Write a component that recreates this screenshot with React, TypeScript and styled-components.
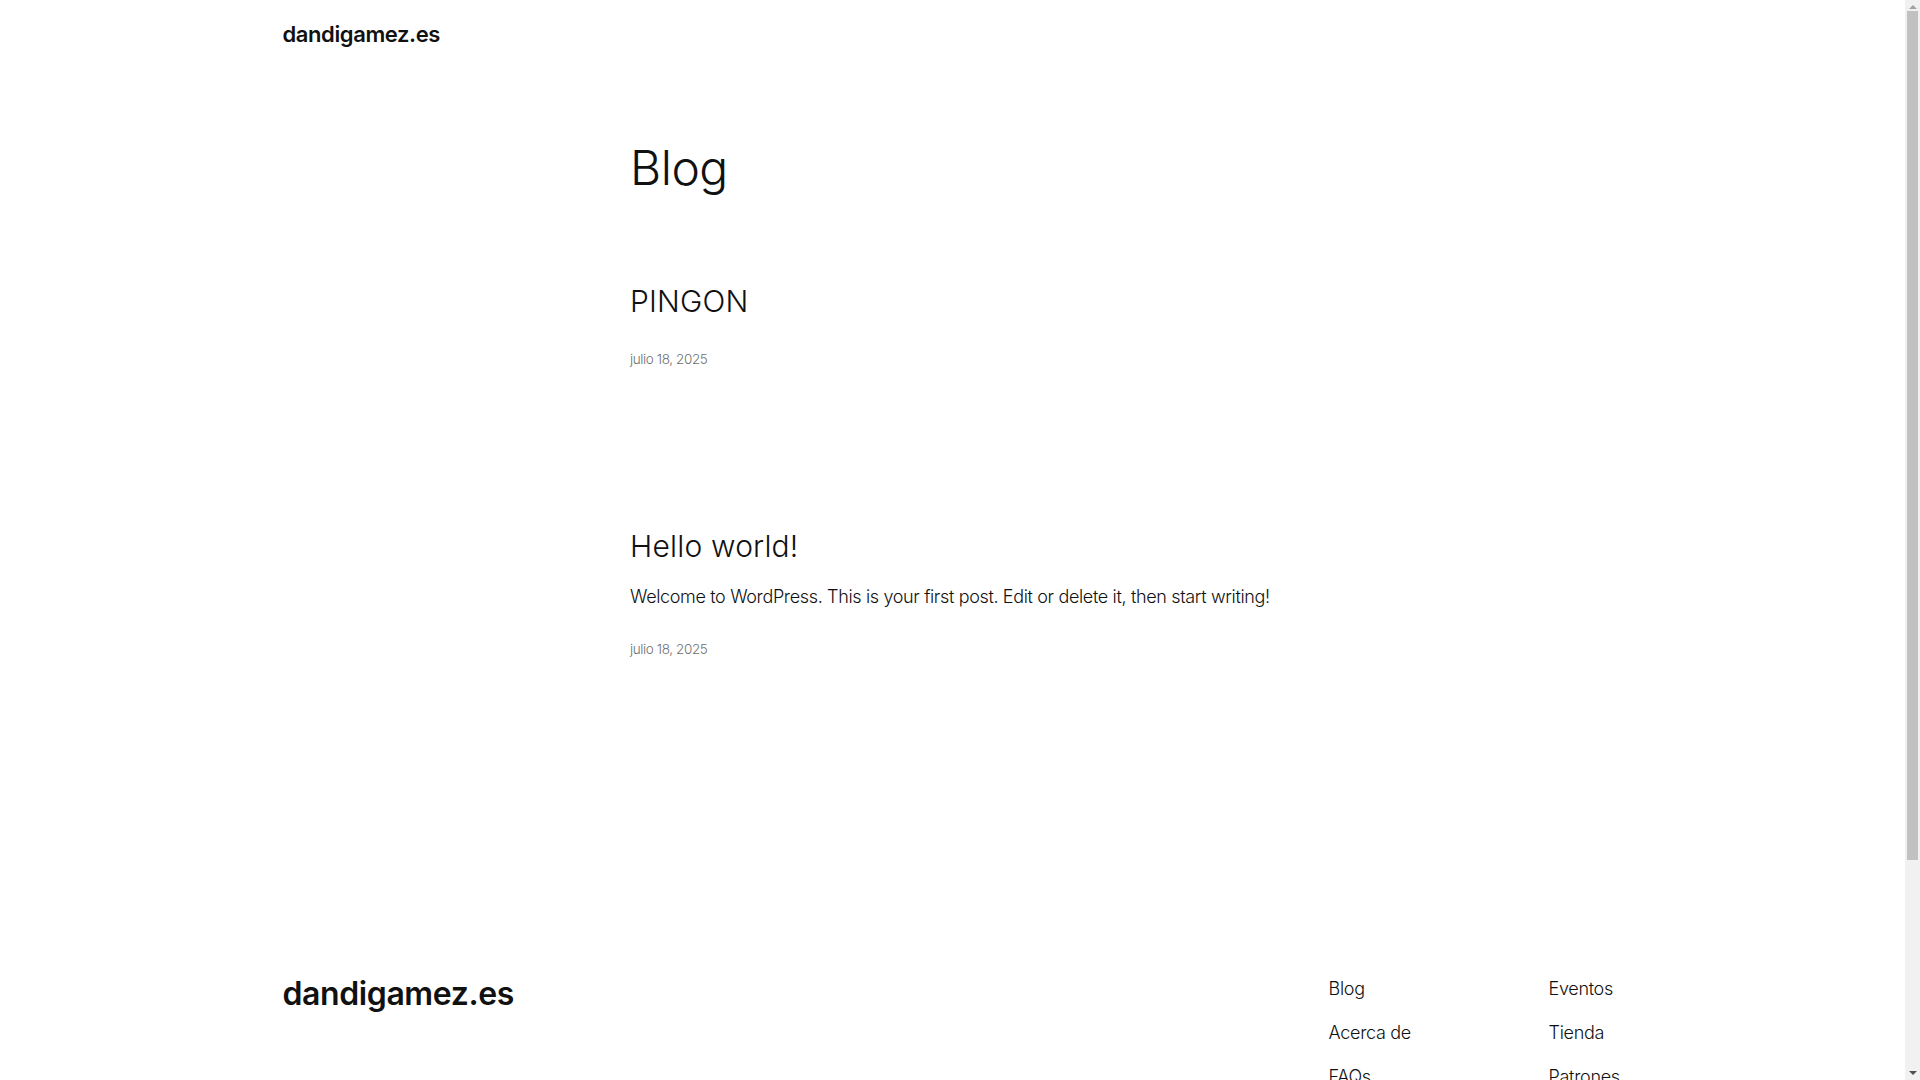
import styled, { createGlobalStyle } from 'styled-components';

const GlobalStyle = createGlobalStyle`
  html, body {
    margin: 0;
    padding: 0;
    background: #ffffff;
  }
  body {
    font-family: 'Inter', 'Liberation Sans', sans-serif;
    color: #111111;
    -webkit-font-smoothing: antialiased;
  }
`;

const posts = [
  { title: 'PINGON', excerpt: '', date: 'julio 18, 2025' },
  {
    title: 'Hello world!',
    excerpt:
      'Welcome to WordPress. This is your first post. Edit or delete it, then start writing!',
    date: 'julio 18, 2025',
  },
];

const navColumns = [
  ['Blog', 'Acerca de', 'FAQs', 'Autores'],
  ['Eventos', 'Tienda', 'Patrones', 'Temas'],
];

export default function App() {
  return (
    <>
      <GlobalStyle />
      <Page>
        <Header>
          <SiteTitle href="#">dandigamez.es</SiteTitle>
        </Header>

        <Main>
          <PageTitle>Blog</PageTitle>
          <PostList>
            {posts.map((post) => (
              <Post key={post.title}>
                <PostTitle>{post.title}</PostTitle>
                {post.excerpt && <Excerpt>{post.excerpt}</Excerpt>}
                <PostDate $spaced={!post.excerpt}>{post.date}</PostDate>
              </Post>
            ))}
          </PostList>
        </Main>

        <Footer>
          <FooterRow>
            <FooterTitle href="#">dandigamez.es</FooterTitle>
            <FooterNav>
              {navColumns.map((col, i) => (
                <NavColumn key={i}>
                  {col.map((item) => (
                    <NavLink key={item} href="#">
                      {item}
                    </NavLink>
                  ))}
                </NavColumn>
              ))}
            </FooterNav>
          </FooterRow>
          <Credits>
            <span>Twenty Twenty-Five</span>
            <span>
              Diseñado con <u>WordPress</u>
            </span>
          </Credits>
        </Footer>
      </Page>

      {/* the window's scrollbar, drawn over the right edge */}
      <Scrollbar>
        <ArrowUp />
        <Thumb />
        <ArrowDown />
      </Scrollbar>
    </>
  );
}

const Page = styled.div`
  width: calc(100% - 15px);
  display: flex;
  flex-direction: column;
`;

const Wide = styled.div`
  width: 1340px;
  margin: 0 auto;
`;

const Header = styled(Wide)`
  padding-top: 19px;
`;

const SiteTitle = styled.a`
  display: inline-block;
  font-size: 22px;
  line-height: 31px;
  font-weight: 600;
  letter-spacing: -0.4px;
  color: #111111;
  text-decoration: none;
`;

const Main = styled.main`
  width: 645px;
  margin: 0 auto;
  padding-top: 89px;
`;

const PageTitle = styled.h1`
  margin: 0;
  font-size: 48px;
  line-height: 58px;
  font-weight: 300;
  letter-spacing: -0.5px;
`;

const PostList = styled.div`
  display: flex;
  flex-direction: column;
  gap: 159px;
  padding-top: 86px;
`;

const Post = styled.article`
  display: flex;
  flex-direction: column;
`;

const PostTitle = styled.h2`
  margin: 0;
  font-size: 30px;
  line-height: 36px;
  font-weight: 300;
  letter-spacing: 0.2px;
`;

const Excerpt = styled.p`
  margin: 18px 0 0;
  font-size: 18px;
  line-height: 29px;
  font-weight: 300;
  letter-spacing: -0.35px;
`;

const PostDate = styled.time<{ $spaced?: boolean }>`
  margin-top: ${(p) => (p.$spaced ? '30px' : '28px')};
  font-size: 13.5px;
  line-height: 20px;
  font-weight: 300;
  color: #707070;
  letter-spacing: -0.4px;
`;

const Footer = styled(Wide)`
  padding-top: 316px;
  padding-bottom: 60px;
`;

const FooterRow = styled.div`
  display: flex;
  justify-content: space-between;
  align-items: flex-start;
`;

const FooterTitle = styled.a`
  font-size: 32px;
  line-height: 37px;
  font-weight: 600;
  letter-spacing: -0.4px;
  color: #111111;
  text-decoration: none;
`;

const FooterNav = styled.nav`
  display: grid;
  grid-template-columns: 220px 74px;
  padding-top: 1px;
`;

const NavColumn = styled.div`
  display: flex;
  flex-direction: column;
  gap: 19px;
`;

const NavLink = styled.a`
  font-size: 18px;
  line-height: 25px;
  font-weight: 300;
  letter-spacing: -0.3px;
  color: #111111;
  text-decoration: none;
  white-space: nowrap;
`;

const Credits = styled.div`
  display: flex;
  justify-content: space-between;
  margin-top: 110px;
  font-size: 14px;
  font-weight: 300;
  color: #111111;
`;

const Scrollbar = styled.div`
  position: fixed;
  top: 0;
  right: 0;
  width: 15px;
  height: 100vh;
  background: #f1f1f1;
  display: flex;
  flex-direction: column;
  align-items: center;
`;

const ArrowUp = styled.div`
  width: 0;
  height: 0;
  margin: 5px 0 4px;
  border-left: 4px solid transparent;
  border-right: 4px solid transparent;
  border-bottom: 4px solid #a3a3a3;
`;

const Thumb = styled.div`
  width: 11px;
  height: 849px;
  margin-top: -2px;
  background: #c1c1c1;
`;

const ArrowDown = styled.div`
  width: 0;
  height: 0;
  margin-top: auto;
  margin-bottom: 5px;
  border-left: 4px solid transparent;
  border-right: 4px solid transparent;
  border-top: 4px solid #505050;
`;
